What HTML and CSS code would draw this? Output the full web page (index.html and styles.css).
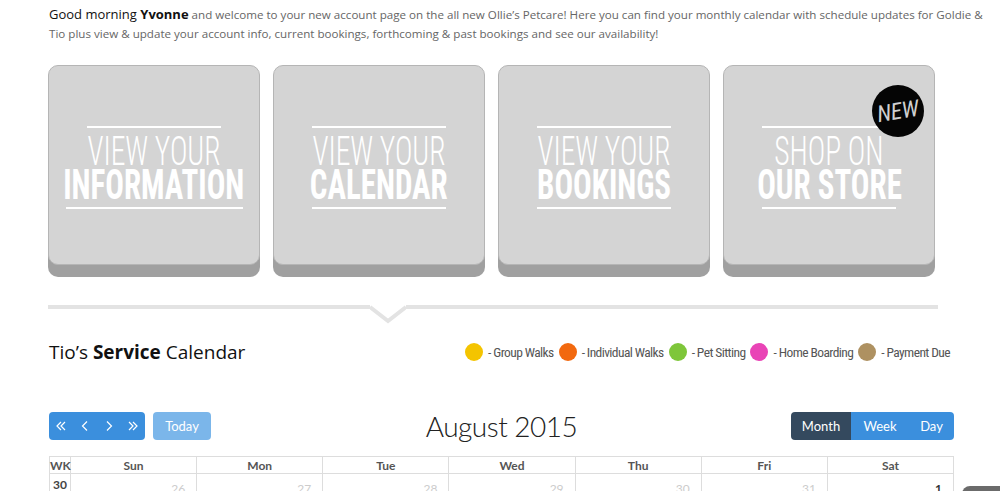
FILE: index.html
```html
<!DOCTYPE html>
<html lang="en">
<head>
  <meta charset="UTF-8">
  <title>My Account - Ollie's Petcare</title>
  <link rel="stylesheet" href="styles.css">
</head>
<body>
  <div class="page">
    <p class="intro"><span class="intro-lead">Good morning <strong>Yvonne</strong></span> and welcome to your new account page on the all new Ollie’s Petcare! Here you can find your monthly calendar with schedule updates for Goldie &amp; Tio plus view &amp; update your account info, current bookings, forthcoming &amp; past bookings and see our availability!</p>

    <div class="tiles">
      <a class="tile" href="#">
        <span class="tile-label tile-label--wide">
          <span class="tile-thin">VIEW YOUR</span>
          <span class="tile-bold">INFORMATION</span>
        </span>
      </a>
      <a class="tile" href="#">
        <span class="tile-label">
          <span class="tile-thin">VIEW YOUR</span>
          <span class="tile-bold">CALENDAR</span>
        </span>
      </a>
      <a class="tile" href="#">
        <span class="tile-label">
          <span class="tile-thin">VIEW YOUR</span>
          <span class="tile-bold">BOOKINGS</span>
        </span>
      </a>
      <a class="tile" href="#">
        <span class="tile-label">
          <span class="tile-thin">SHOP ON</span>
          <span class="tile-bold">OUR STORE</span>
        </span>
        <span class="badge-new"><span class="badge-text">NEW</span></span>
      </a>
    </div>

    <div class="divider">
      <span class="divider-line divider-line--left"></span>
      <svg class="divider-notch" width="36" height="20" viewBox="0 0 36 20"><polyline points="0,2 18,16 36,2" fill="none" stroke="#e3e3e3" stroke-width="4"/></svg>
      <span class="divider-line"></span>
    </div>

    <div class="cal-head">
      <h2 class="cal-title">Tio’s <strong>Service</strong> Calendar</h2>
      <ul class="legend">
        <li class="legend-item"><span class="dot dot--group"></span>- Group Walks</li>
        <li class="legend-item"><span class="dot dot--individual"></span>- Individual Walks</li>
        <li class="legend-item"><span class="dot dot--sitting"></span>- Pet Sitting</li>
        <li class="legend-item"><span class="dot dot--boarding"></span>- Home Boarding</li>
        <li class="legend-item"><span class="dot dot--payment"></span>- Payment Due</li>
      </ul>
    </div>

    <div class="toolbar">
      <div class="toolbar-left">
        <div class="btn-group">
          <button class="btn btn--icon"><svg width="12" height="12" viewBox="0 0 12 12"><polyline points="6,2 2,6 6,10" fill="none" stroke="#fff" stroke-width="1.2"/><polyline points="10,2 6,6 10,10" fill="none" stroke="#fff" stroke-width="1.2"/></svg></button>
          <button class="btn btn--icon"><svg width="12" height="12" viewBox="0 0 12 12"><polyline points="8,1.5 3.5,6 8,10.5" fill="none" stroke="#fff" stroke-width="1.2"/></svg></button>
          <button class="btn btn--icon"><svg width="12" height="12" viewBox="0 0 12 12"><polyline points="4,1.5 8.5,6 4,10.5" fill="none" stroke="#fff" stroke-width="1.2"/></svg></button>
          <button class="btn btn--icon"><svg width="12" height="12" viewBox="0 0 12 12"><polyline points="2,2 6,6 2,10" fill="none" stroke="#fff" stroke-width="1.2"/><polyline points="6,2 10,6 6,10" fill="none" stroke="#fff" stroke-width="1.2"/></svg></button>
        </div>
        <button class="btn btn--today">Today</button>
      </div>
      <h3 class="month-title">August 2015</h3>
      <div class="btn-group toolbar-right">
        <button class="btn btn--active btn--month">Month</button>
        <button class="btn btn--week">Week</button>
        <button class="btn btn--day">Day</button>
      </div>
    </div>

    <table class="cal">
      <thead>
        <tr>
          <th class="cal-wk">WK</th>
          <th>Sun</th><th>Mon</th><th>Tue</th><th>Wed</th><th>Thu</th><th>Fri</th><th>Sat</th>
        </tr>
      </thead>
      <tbody>
        <tr>
          <td class="cal-wk">30</td>
          <td class="day day--other">26</td>
          <td class="day day--other">27</td>
          <td class="day day--other">28</td>
          <td class="day day--other">29</td>
          <td class="day day--other">30</td>
          <td class="day day--other">31</td>
          <td class="day">1</td>
        </tr>
      </tbody>
    </table>
  </div>

  <div class="side-tab"></div>
</body>
</html>
```

FILE: styles.css
```css
body {
  margin: 0;
  background: #fff;
  font-family: "Open Sans", sans-serif;
  color: #666;
  overflow: hidden;
}

.page {
  width: 905px;
  margin-left: 49px;
}

.intro {
  margin: 5px -35px 0 0;
  font-size: 11.6px;
  line-height: 19px;
}

.intro-lead {
  font-size: 13px;
  color: #111;
}

/* tiles */

.tiles {
  display: flex;
  gap: 13px;
  margin-top: 22px;
  margin-left: -1px;
}

.tile {
  position: relative;
  width: 212px;
  height: 200px;
  box-sizing: border-box;
  background: #d4d4d4;
  border: 1px solid #b5b5b5;
  border-radius: 10px;
  box-shadow: 0 12px 0 #a0a0a0;
  display: flex;
  align-items: center;
  justify-content: center;
  text-decoration: none;
  color: #fff;
}

.tile-label {
  display: flex;
  flex-direction: column;
  align-items: center;
  margin-top: 4px;
  font-family: "Roboto Condensed", "Liberation Sans Narrow", "DejaVu Sans Condensed", sans-serif;
}

.tile-label::before,
.tile-label::after {
  content: "";
  display: block;
  width: 134px;
  height: 2px;
  background: #fff;
}

.tile-label--wide::after {
  width: 177px;
}

.tile-thin {
  margin-top: 8px;
  font-size: 40px;
  font-weight: 300;
  line-height: 32px;
  transform: scaleX(0.74);
}

.tile-bold {
  margin-bottom: 6px;
  font-size: 43px;
  font-weight: 700;
  line-height: 33px;
  transform: scaleX(0.72);
}

.badge-new {
  position: absolute;
  top: 19px;
  right: 10px;
  width: 52px;
  height: 52px;
  border-radius: 50%;
  background: #050505;
  display: flex;
  align-items: center;
  justify-content: center;
}

.badge-text {
  color: #d0d0d0;
  font-family: "Roboto Condensed", "Liberation Sans Narrow", sans-serif;
  font-size: 23px;
  font-style: italic;
  font-weight: 400;
  transform: rotate(-9deg);
}

/* divider */

.divider {
  display: flex;
  align-items: flex-start;
  width: 890px;
  margin: 40px 0 0 -1px;
}

.divider-line {
  flex: 1;
  height: 4px;
  background: #e3e3e3;
}

.divider-line--left {
  flex: 0 0 322px;
}

.divider-notch {
  display: block;
}

/* calendar header */

.cal-head {
  display: flex;
  justify-content: space-between;
  align-items: center;
  margin-top: 14px;
}

.cal-title {
  margin: 0;
  font-size: 19px;
  font-weight: 400;
  color: #111;
}

.cal-title strong {
  font-weight: 700;
}

.legend {
  display: flex;
  align-items: center;
  gap: 5px;
  margin: 0 4px 0 0;
  padding: 0;
  list-style: none;
  font-family: "Roboto Condensed", "Liberation Sans Narrow", "DejaVu Sans Condensed", sans-serif;
  font-size: 13.5px;
  letter-spacing: -0.6px;
  color: #555;
}

.legend-item {
  display: flex;
  align-items: center;
  gap: 5px;
}

.dot {
  width: 18px;
  height: 18px;
  border-radius: 50%;
}

.dot--group { background: #f4c400; }
.dot--individual { background: #f2690f; }
.dot--sitting { background: #7ec63a; }
.dot--boarding { background: #e944b6; }
.dot--payment { background: #ae9161; }

/* toolbar */

.toolbar {
  display: grid;
  grid-template-columns: 1fr auto 1fr;
  align-items: center;
  margin-top: 44px;
}

.toolbar-left {
  display: flex;
  gap: 8px;
}

.toolbar-right {
  justify-self: end;
}

.btn-group {
  display: flex;
  border-radius: 4px;
  overflow: hidden;
}

.btn {
  height: 28px;
  padding: 0;
  border: 0;
  background: #3b8fdd;
  color: #fff;
  font-family: Lato, sans-serif;
  font-size: 13px;
}

.btn--icon {
  width: 24px;
  display: flex;
  align-items: center;
  justify-content: center;
}

.btn--today {
  width: 58px;
  border-radius: 4px;
  background: #7bb6ea;
}

.btn--active {
  background: #34495e;
}

.btn--month { width: 60px; }
.btn--week { width: 58px; }
.btn--day { width: 45px; }

.month-title {
  margin: 0;
  font-family: Lato, sans-serif;
  font-size: 28px;
  font-weight: 300;
  letter-spacing: -0.5px;
  color: #222;
}

/* table */

.cal {
  width: 905px;
  margin-top: 13px;
  border-collapse: collapse;
  table-layout: fixed;
  font-family: Lato, sans-serif;
  font-size: 12px;
}

.cal th,
.cal td {
  border: 1px solid #ddd;
}

.cal th {
  height: 16px;
  padding: 0;
  color: #555;
  font-weight: 700;
}

.cal th.cal-wk {
  width: 20px;
}

.cal td.cal-wk {
  vertical-align: top;
  padding: 3px 0 0;
  text-align: center;
  font-weight: 700;
  color: #444;
}

.day {
  height: 60px;
  padding: 7px 11px 0 0;
  vertical-align: top;
  text-align: right;
  color: #333;
  font-weight: 700;
}

.day--other {
  color: #ccc;
  font-weight: 400;
}

.side-tab {
  position: fixed;
  left: 962px;
  top: 486px;
  width: 50px;
  height: 20px;
  border-radius: 8px;
  background: #6b6b6b;
}
```
